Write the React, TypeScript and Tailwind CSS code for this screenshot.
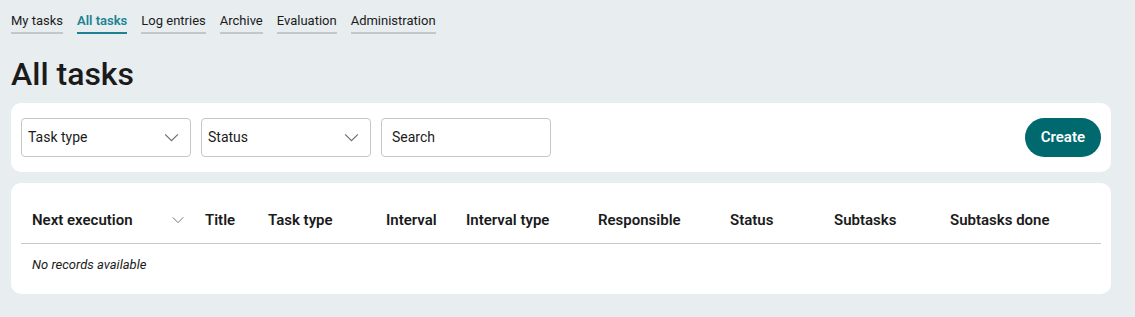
const navItems = ["My tasks", "All tasks", "Log entries", "Archive", "Evaluation", "Administration"];

const columns = [
  { label: "Next execution", w: "w-[173px]", sort: true },
  { label: "Title", w: "w-[63px]" },
  { label: "Task type", w: "w-[118px]" },
  { label: "Interval", w: "w-[80px]" },
  { label: "Interval type", w: "w-[132px]" },
  { label: "Responsible", w: "w-[132px]" },
  { label: "Status", w: "w-[104px]" },
  { label: "Subtasks", w: "w-[116px]" },
  { label: "Subtasks done", w: "flex-1" },
];

const Chevron = ({ className }: { className?: string }) => (
  <svg viewBox="0 0 16 16" className={className} fill="none" stroke="currentColor" strokeWidth="1.1">
    <path d="M2 5l6 6 6-6" />
  </svg>
);

const Select = ({ label }: { label: string }) => (
  <div className="w-[170px] h-[39px] flex items-center justify-between pl-[6px] pr-[10px] border border-[#c3c7ca] rounded-[4px] text-[14px] text-[#1b1b1b]">
    <span>{label}</span>
    <Chevron className="w-[17px] h-[17px] text-[#6b6f72]" />
  </div>
);

export default function App() {
  return (
    <div className="min-h-[317px] bg-[#e8edf0] pl-[11px] pr-[24px] pt-[11px] pb-[23px] font-['Roboto',sans-serif] text-[#1b1b1b]">
      <nav className="flex gap-[14px] text-[13px]">
        {navItems.map((item) => (
          <div
            key={item}
            className={
              item === "All tasks"
                ? "pb-[2px] border-b-2 border-[#1b8391] text-[#1b8391] font-semibold leading-[19px]"
                : "pb-[2px] border-b-2 border-[#c2c7ca] leading-[19px]"
            }
          >
            {item}
          </div>
        ))}
      </nav>

      <h1 className="mt-[20px] text-[32px] font-medium leading-[40px] text-[#1b1b1b]">All tasks</h1>

      <div className="mt-[9px] bg-white rounded-[10px] h-[69px] px-[10px] flex items-center gap-[10px]">
        <Select label="Task type" />
        <Select label="Status" />
        <div className="w-[170px] h-[39px] flex items-center px-[10px] border border-[#c3c7ca] rounded-[4px] text-[14px]">
          Search
        </div>
        <button className="ml-auto h-[39px] px-[16px] rounded-full bg-[#00696e] text-white text-[15px] font-semibold">
          Create
        </button>
      </div>

      <div className="mt-[11px] bg-white rounded-[10px] px-[10px] pt-[14px] pb-[21px]">
        <div className="flex items-center h-[47px] border-b border-[#c3c9cc] text-[15px] font-semibold">
          {columns.map((c) => (
            <div key={c.label} className={`${c.w} flex items-center pl-[11px]`}>
              <span>{c.label}</span>
              {c.sort && <Chevron className="ml-auto mr-[9px] w-[14px] h-[14px] text-[#6b6f72]" />}
            </div>
          ))}
        </div>
        <div className="pl-[11px] pt-[13px] text-[13px] italic leading-[16px]">No records available</div>
      </div>
    </div>
  );
}
